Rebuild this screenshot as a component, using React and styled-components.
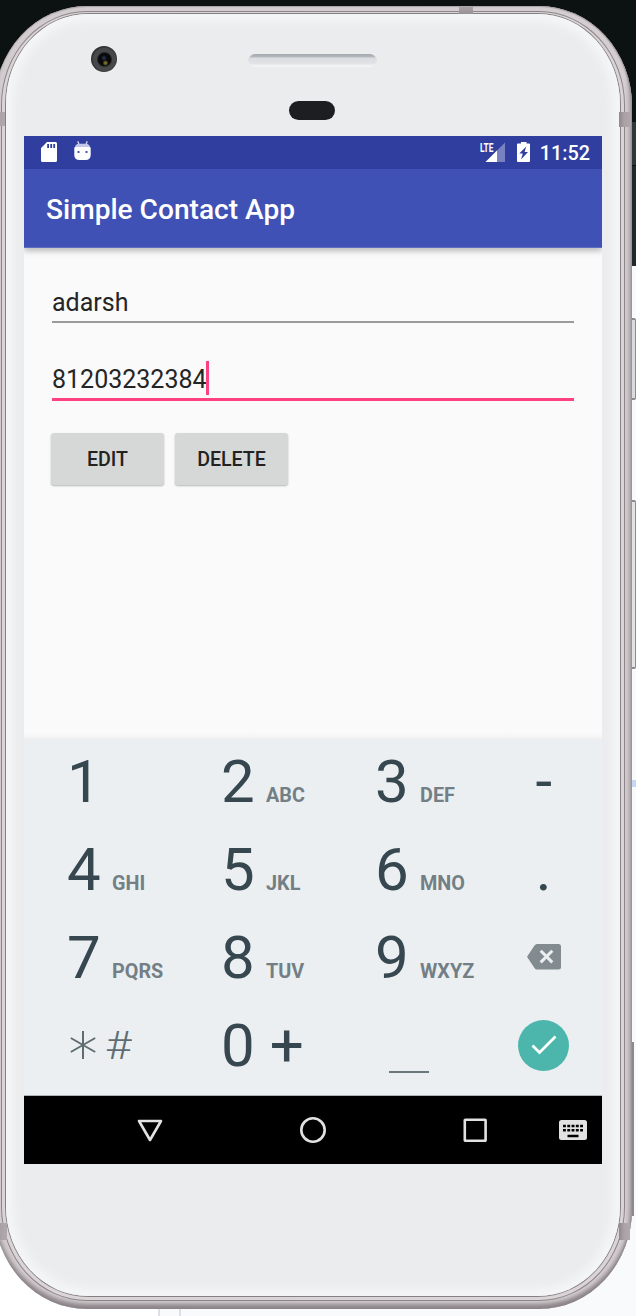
import React from "react";
import styled, { createGlobalStyle } from "styled-components";

const Global = createGlobalStyle`
  * { box-sizing: border-box; }
  body { margin: 0; overflow: hidden; font-family: Roboto, "Liberation Sans", sans-serif; }
`;

const Desktop = styled.div`
  position: relative;
  width: 636px;
  height: 1316px;
  overflow: hidden;
  background: linear-gradient(#0c1112 0 266px, #f8fafc 266px 100%);
`;

const Backdrop = styled.div`
  position: absolute;
  inset: 0;
  display: flex;
  justify-content: space-between;
  align-items: flex-end;
`;

const PageCorner = styled.div`
  width: 181px;
  height: 200px;
  display: flex;
  align-items: flex-end;
  background: #fff;
`;

const PageTab = styled.div`
  width: 24px;
  height: 8px;
  margin-left: 158px;
  border: solid #dde1e5;
  border-width: 0 2px;
  background: #f8fafb;
`;

const EdgeStrip = styled.div`
  width: 6px;
  height: 1316px;
`;

const EdgePiece = styled.div`
  height: ${(p) => p.$h}px;
  width: ${(p) => p.$w || 6}px;
  background: ${(p) => p.$fill || "transparent"};
  ${(p) => p.$outlined && "border: 1px solid #8d8a8c; border-width: 2px 1px 2px 0; border-radius: 0 2px 2px 0;"}
`;

const Phone = styled.div`
  position: relative;
  width: 638px;
  height: 1303px;
  margin: 0 0 0 -6px;
  top: 6px;
  padding: 5px 7px 8px;
  border-radius: 93px / 100px;
  background: linear-gradient(90deg, #b9b1b5 0, #d3cccf 6px, #d5ced1 631px, #b2abb0 638px);
  box-shadow: inset 0 1px 1px #aaa3a6, inset 0 -5px 4px #8b8388, inset -1px 0 1px #a39ca0;
`;

const Rim = styled.div`
  height: 1290px;
  padding: 2px 4px 4px;
  border: 1px solid #8c8588;
  border-radius: 86px / 94px;
  background: #dad4d7;
`;

const Glass = styled.div`
  height: 1282px;
  padding: 0 18px;
  border-radius: 82px / 90px;
  background: #ebeced;
  box-shadow: 0 0 0 1px #858084, inset 0 0 8px 8px #f4f5f7;
`;

const Band = styled.span`
  position: absolute;
  left: ${(p) => p.$x}px;
  top: ${(p) => p.$y}px;
  width: ${(p) => p.$w}px;
  height: ${(p) => p.$h}px;
  background: ${(p) => (p.$w > p.$h
    ? "linear-gradient(#aaa2a6, #989195)"
    : "linear-gradient(90deg, #8f888c, #aaa2a6 45%, #b0a8ac)")};
`;

const Earpiece = styled.div`
  height: 122px;
  display: grid;
  grid-template-columns: 225px 127px 1fr;
`;

const Camera = styled.div`
  width: 26px;
  height: 26px;
  margin: 32px 0 0 67px;
  border-radius: 50%;
  background:
    radial-gradient(circle at 14.5px 17px, #766b28 0 1px, transparent 3px),
    radial-gradient(circle at 13px 12px, #262a48 0 1px, transparent 3px),
    radial-gradient(circle at 13.5px 13.5px, #08090b 0 6px, #47484a 8px 11px, #2c2d2f 13px);
`;

const Sensors = styled.div`
  display: flex;
  flex-direction: column;
  align-items: center;
`;

const Speaker = styled.div`
  width: 127px;
  height: 12px;
  margin-top: 40px;
  border-radius: 6px;
  background: linear-gradient(#a1a7ae 0, #b5babf 3px, #dbdde1 4px, #dfe1e4 9px, #f3f4f5);
  box-shadow: 0 1px 1px #f5f6f7, -1px 0 0 -0.5px #c5c8cc, 1px 0 0 -0.5px #c5c8cc;
`;

const Proximity = styled.div`
  width: 46px;
  height: 19px;
  margin-top: 35px;
  margin-right: 1px;
  border-radius: 10px;
  background: #1c1e22;
`;

const Screen = styled.div`
  height: 1028px;
  display: flex;
  flex-direction: column;
  background: #fafafa;
`;

const StatusBar = styled.div`
  height: 33px;
  flex: none;
  display: flex;
  align-items: flex-start;
  padding: 5px 12px 0 16px;
  background: #303f9f;
  color: #fff;
`;

const StatusIcon = styled.svg`
  flex: none;
  margin-left: ${(p) => p.$gap || 0}px;
`;

const Clock = styled.time`
  margin: 1px 0 0 9px;
  font-size: 19.8px;
  font-weight: 500;
  line-height: 24px;
`;

const Spacer = styled.div`
  flex: 1;
`;

const AppBar = styled.header`
  height: 78.6px;
  flex: none;
  display: flex;
  align-items: center;
  padding: 4px 22px 0;
  background: #3f51b5;
  border-bottom: 1px solid #5e6dc2;
  box-shadow: 0 3px 6px rgba(0, 0, 0, 0.26);
  clip-path: inset(0 0 -16px 0);
`;

const Title = styled.h1`
  margin: 0;
  color: #fff;
  font-size: 28.1px;
  font-weight: 500;
  line-height: 34px;
`;

const Form = styled.main`
  flex: 1;
  padding: 35px 28px 0;
  background: linear-gradient(0deg, #eeefef 0, #f7f7f7 3px, #fafafa 8px);
`;

const Field = styled.div`
  height: ${(p) => (p.$active ? 41 : 40)}px;
  width: 521.5px;
  margin-top: ${(p) => (p.$active ? 37.4 : 0)}px;
  display: flex;
  align-items: flex-start;
  border-bottom: ${(p) => (p.$active ? "3px solid #ff4081" : "2px solid #9b9b9b")};
  color: #252525;
  font-size: 25px;
  line-height: 40px;
`;

const Caret = styled.i`
  width: 3px;
  height: 34px;
  margin-top: 1px;
  margin-left: -1px;
  background: #ff4081;
`;

const Actions = styled.div`
  display: flex;
  gap: 11px;
  margin: 32px 0 0 -1px;
`;

const Button = styled.button`
  width: 113px;
  height: 52px;
  padding: 2px 0 0;
  border: 0;
  border-radius: 3px;
  background: #d6d8d7;
  box-shadow: 0 1px 2px rgba(0, 0, 0, 0.28);
  color: #222;
  font: 500 19.6px/50px Roboto, "Liberation Sans", sans-serif;
`;

const Keypad = styled.section`
  height: 357px;
  flex: none;
  display: grid;
  grid-template-columns: 154px 154px 110.5px 116.5px;
  grid-auto-rows: 88.3px;
  padding-left: 43px;
  background: #ebeff2;
  border-bottom: 1px solid #aeb2b5;
`;

const Key = styled.div`
  display: flex;
  align-items: baseline;
  justify-content: ${(p) => (p.$side ? "center" : "flex-start")};
  padding-top: 12.5px;
  white-space: nowrap;
  color: #37474f;
  font-size: 60px;
  line-height: 60px;
`;

const Letters = styled.span`
  margin-left: 11.3px;
  color: #737f85;
  font-size: 19.8px;
  font-weight: 700;
  line-height: 24px;
`;

const Plus = styled.span`
  margin-left: 15px;
`;

const IconKey = styled.div`
  display: flex;
  align-items: center;
  justify-content: center;
  padding-bottom: ${(p) => p.$lift || 0}px;
`;

const SymbolKey = styled(Key)`
  color: #5f6d73;
  font-size: 39px;
  font-weight: 300;
  gap: 9px;
  padding-left: 3px;
`;

const Hash = styled.span`
  transform: scaleX(1.17);
  transform-origin: left;
`;

const SpaceMark = styled.div`
  width: 40px;
  height: 2px;
  margin: 67px 0 0 14px;
  background: #6b777d;
`;

const Enter = styled.div`
  width: 51px;
  height: 51px;
  display: flex;
  align-items: center;
  justify-content: center;
  border-radius: 50%;
  background: #4db6ac;
`;

const NavBar = styled.nav`
  height: 68px;
  flex: none;
  display: grid;
  grid-template-columns: 162.7px 162.7px 162.6px 33.5px;
  align-items: center;
  justify-items: center;
  padding: 0 0 1px 44.5px;
  background: #000;
`;

const rows = [
  [["1", ""], ["2", "ABC"], ["3", "DEF"], "-"],
  [["4", "GHI"], ["5", "JKL"], ["6", "MNO"], "."],
  [["7", "PQRS"], ["8", "TUV"], ["9", "WXYZ"], null],
];

const Backspace = () => (
  <svg width="34" height="26" viewBox="0 0 34 26">
    <path d="M10 0H31.5Q34 0 34 2.5V23Q34 25.5 31.5 25.5H10Q8.5 25.5 7.5 24L0 12.8 7.5 1.5Q8.5 0 10 0Z" fill="#828c90" />
    <path d="M13.7 6.8 25.3 18.4M25.3 6.8 13.7 18.4" stroke="#ebeff2" strokeWidth="3" />
  </svg>
);

const edge = [
  [122], [43, "#30373a"], [1], [100, "#22292c"], [52],
  [82, "#d9dcdf", true], [100], [169, "#e2e4e4", true], [111],
  [7, "#c5d9f1"], [255], [174, "#8f898c", false, 4],
];

export default function App() {
  return (
    <Desktop>
      <Global />
      <Backdrop>
        <PageCorner><PageTab /></PageCorner>
        <EdgeStrip>
          {edge.map(([h, fill, outlined, w], i) => (
            <EdgePiece key={i} $h={h} $w={w} $fill={fill} $outlined={outlined} />
          ))}
        </EdgeStrip>
      </Backdrop>
      <Phone>
        <Rim>
          <Glass>
            <Earpiece>
              <Camera />
              <Sensors>
                <Speaker />
                <Proximity />
              </Sensors>
            </Earpiece>
            <Screen>
              <StatusBar>
                <StatusIcon width="18" height="22" $gap={1}>
                  <path fillRule="evenodd" fill="#fff" d="M6 1H14.5Q16 1 16 2.5V19.5Q16 21 14.5 21H1.5Q0 21 0 19.5V7ZM6.2 3V7H8V3ZM9.3 3V7H11.1V3ZM12.3 3V7H14.1V3Z" />
                </StatusIcon>
                <StatusIcon width="18" height="22" $gap={15}>
                  <path d="M3.8 .2 5 3.500M13.2 .2 12 3.500" stroke="#d5d8ef" strokeWidth="1.3" />
                  <path d="M1 6.200Q1.5 2.700 5 2.700H12Q15.500 2.700 16 6.200Z" fill="#c3c8e8" />
                  <path d="M.3 7Q.3 6 1.300 6H15.500Q16.700 6 16.700 7V14Q16.700 19 11.500 19H5.500Q.3 19 .3 14Z" fill="#fff" />
                  <path d="M3.500 10h2v2h-2zM11.500 10h2v2h-2z" fill="#4754aa" />
                </StatusIcon>
                <Spacer />
                <StatusIcon width="26" height="22">
                  <path d="M5.500 21 25 1.500V21Z" fill="#fff" fillOpacity=".35" />
                  <path d="M5.500 21 17 9.500V21Z" fill="#fff" />
                  <text x="0" y="10.500" fill="#fff" fontFamily="Roboto, sans-serif" fontSize="12" fontWeight="700" textLength="13.500" lengthAdjust="spacingAndGlyphs">LTE</text>
                </StatusIcon>
                <StatusIcon width="14" height="22" $gap={11}>
                  <path d="M4 1H9.500V2.500H12Q13 2.500 13 3.500V20Q13 21 12 21H1Q0 21 0 20V3.500Q0 2.500 1 2.500H4Z" fill="#fff" />
                  <path d="M9.200 5.500 2.300 12.500H5.800L4 18.500 11 11H7.600Z" fill="#303f9f" />
                </StatusIcon>
                <Clock>11:52</Clock>
              </StatusBar>
              <AppBar><Title>Simple Contact App</Title></AppBar>
              <Form>
                <Field>adarsh</Field>
                <Field $active>81203232384<Caret /></Field>
                <Actions>
                  <Button>EDIT</Button>
                  <Button>DELETE</Button>
                </Actions>
              </Form>
              <Keypad>
                {rows.map((row) => row.map((k, i) => {
                  if (k === null) return <IconKey key="back" $lift={6}><Backspace /></IconKey>;
                  if (i === 3) return <Key key={k} $side>{k}</Key>;
                  return <Key key={k[0]}>{k[0]}{k[1] && <Letters>{k[1]}</Letters>}</Key>;
                }))}
                <SymbolKey>
                  <svg width="26" height="28" viewBox="0 0 26 28">
                    <path d="M13 0V28M.8 7 25.200 21M25.200 7 .8 21" stroke="#5f6d73" strokeWidth="2" />
                  </svg>
                  <Hash>#</Hash>
                </SymbolKey>
                <Key>0<Plus>+</Plus></Key>
                <SpaceMark />
                <IconKey $lift={6}>
                  <Enter>
                    <svg width="26" height="20" viewBox="0 0 26 20">
                      <path d="M1.500 10.500 8.500 17.500 24.500 1.500" fill="none" stroke="#fff" strokeWidth="2.700" />
                    </svg>
                  </Enter>
                </IconKey>
              </Keypad>
              <NavBar>
                <svg width="26" height="24"><path d="M2 3H24L13 22Z" fill="none" stroke="#e2e2e2" strokeWidth="2.600" strokeLinejoin="round" /></svg>
                <svg width="28" height="28"><circle cx="14" cy="14" r="11.700" fill="none" stroke="#e2e2e2" strokeWidth="2.600" /></svg>
                <svg width="24" height="24"><rect x="1.800" y="1.800" width="20.800" height="21" rx=".5" fill="none" stroke="#e2e2e2" strokeWidth="2.600" /></svg>
                <svg width="28" height="20">
                  <rect width="28" height="20" rx="2.500" fill="#e2e2e2" />
                  <path d="M4 6H24M4 10.200H24" stroke="#000" strokeWidth="2.500" strokeDasharray="2.900 1.380" />
                  <path d="M8.500 16H19.500" stroke="#000" strokeWidth="2.500" />
                </svg>
              </NavBar>
            </Screen>
          </Glass>
        </Rim>
        <Band $x={0} $y={106} $w={11} $h={14} />
        <Band $x={625} $y={106} $w={12} $h={15} />
        <Band $x={465} $y={1} $w={14} $h={7} />
        <Band $x={2} $y={1217} $w={11} $h={17} />
        <Band $x={625} $y={1217} $w={11} $h={17} />
      </Phone>
    </Desktop>
  );
}
